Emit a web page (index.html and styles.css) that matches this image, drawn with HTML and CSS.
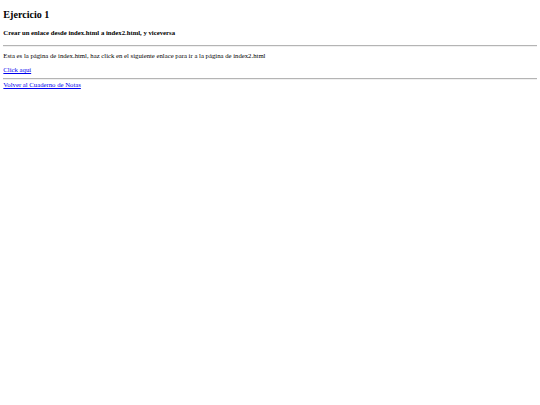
FILE: index.html
```html
<!DOCTYPE html>
<html lang="es">
<head>
    <meta charset="UTF-8">
    <meta name="viewport" content="width=device-width, initial-scale=1.0">
    <title>Ejercicio 1</title>
    <link rel="stylesheet" href="styles.css">
</head>
<body>
    <h2 class="title">Ejercicio 1</h2>
    <h4 class="subtitle">Crear un enlace desde index.html a index2.html, y viceversa</h4>
    <hr class="rule">
    <p class="text">Esta es la página de index.html, haz click en el siguiente enlace para ir a la página de index2.html</p>
    <a href="index2.html">Click aquí</a>
    <hr class="rule rule-bottom">
    <a href="../index.html">Volver al Cuaderno de Notas</a>
</body>
</html>
```

FILE: styles.css
```css
body {
    font-family: "Liberation Serif", "Times New Roman", serif;
    font-size: 6.72px;
    line-height: 7.7px;
    margin: 3.36px;
    background-color: white;
    color: black;
}
.title {
    font-size: 10.08px;
    line-height: 11.6px;
    margin: 5.4px 0 8.2px;
}
.subtitle {
    font-size: 6.72px;
    margin: 8.2px 0 9.1px;
}
.rule {
    margin: 3.36px 0;
    border: none;
    border-top: 1px solid #b4b4b4;
    border-bottom: 1px solid #f0f0f0;
}
.rule-bottom {
    margin-top: 4.3px;
    margin-bottom: 0.8px;
}
.text {
    margin: 5px 0 6.4px;
}
a {
    color: #0000ee;
}
```
